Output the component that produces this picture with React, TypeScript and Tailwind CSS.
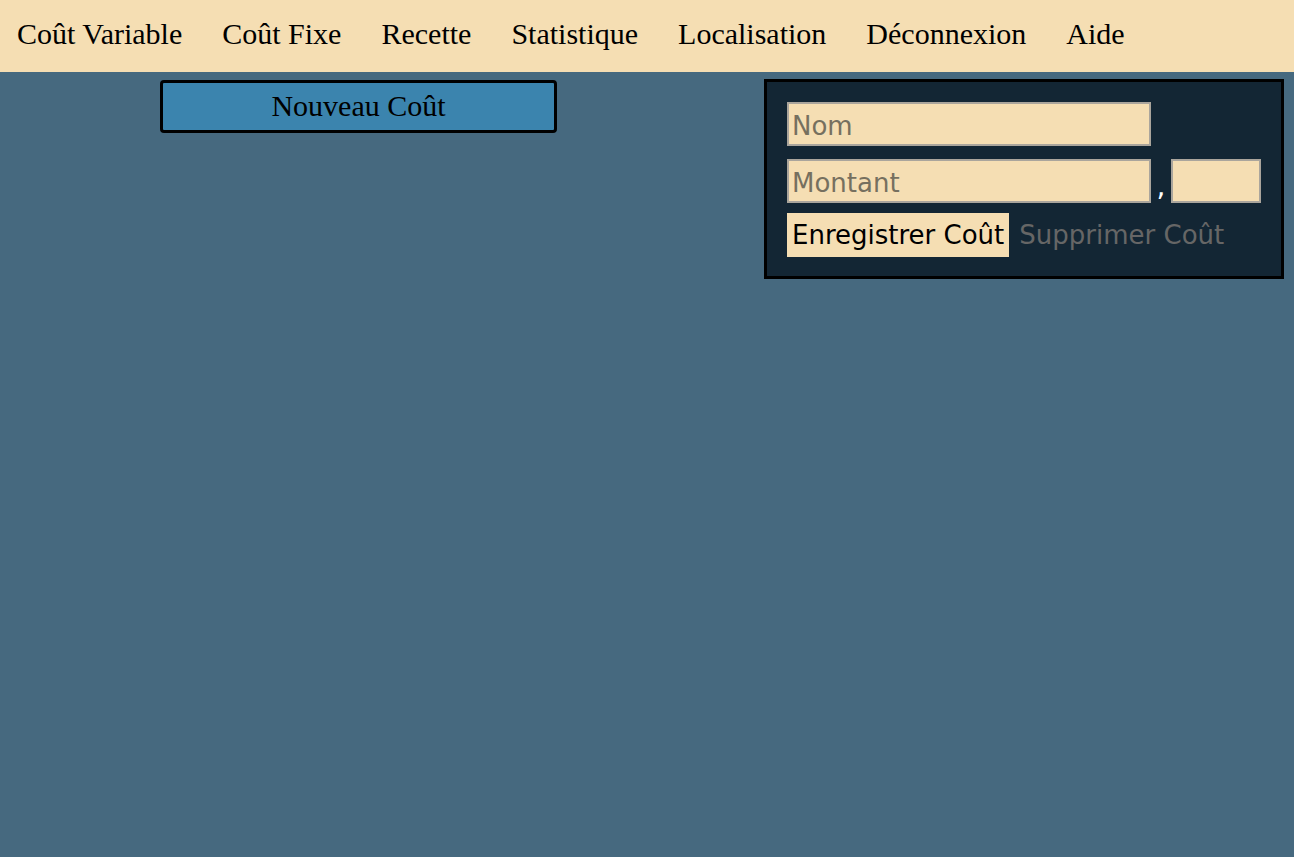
const navItems = [
  "Coût Variable",
  "Coût Fixe",
  "Recette",
  "Statistique",
  "Localisation",
  "Déconnexion",
  "Aide",
];

const App = () => {
  return (
    <div className="flex min-h-[857px] flex-col bg-[#46697f]">
      <nav className="flex h-[72px] items-center gap-[40px] bg-[#f5deb3] pb-[4px] pl-[17px] font-['Liberation_Serif',serif] text-[30px] text-black">
        {navItems.map((item) => (
          <a key={item} href="#" className="leading-none">
            {item}
          </a>
        ))}
      </nav>

      <main className="flex items-start">
        <button className="ml-[160px] mt-[8px] h-[53px] w-[397px] rounded-[4px] border-[3px] border-black bg-[#3b84ae] pb-[2px] font-['Liberation_Serif',serif] text-[30px] text-black">
          Nouveau Coût
        </button>

        <div className="ml-auto mr-[10px] mt-[7px] flex w-[520px] flex-col gap-[13px] border-[3px] border-black bg-[#132634] px-[20px] pb-[19px] pt-[20px] font-['DejaVu_Sans',sans-serif] text-[26px]">
          <input
            placeholder="Nom"
            className="h-[44px] w-[364px] border-2 border-[#aaa59c] bg-[#f5deb3] px-[3px] pt-[3px] text-black placeholder:text-[#76705f] outline-none"
          />
          <div className="flex items-end">
            <input
              placeholder="Montant"
              className="h-[44px] w-[364px] border-2 border-[#aaa59c] bg-[#f5deb3] px-[3px] pt-[3px] text-black placeholder:text-[#76705f] outline-none"
            />
            <span className="w-[20px] text-center text-[28px] leading-[32px] text-white">,</span>
            <input className="h-[44px] w-[90px] border-2 border-[#aaa59c] bg-[#f5deb3] px-[3px] outline-none" />
          </div>
          <div className="-mt-[3px] flex h-[44px] items-center gap-[10px]">
            <button className="h-[44px] bg-[#f5deb3] px-[5px] text-black">
              Enregistrer Coût
            </button>
            <button className="text-[#666666]">Supprimer Coût</button>
          </div>
        </div>
      </main>
    </div>
  );
};

export default App;
